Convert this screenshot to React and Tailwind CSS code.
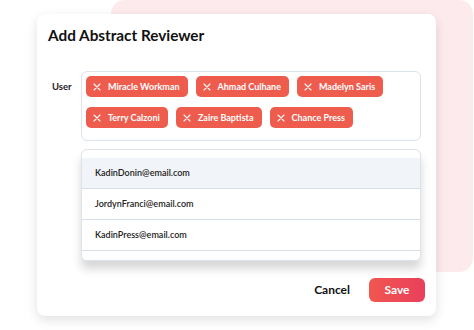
const users = [
  ["Miracle Workman", "Ahmad Culhane", "Madelyn Saris"],
  ["Terry Calzoni", "Zaire Baptista", "Chance Press"],
];

const emails = [
  "KadinDonin@email.com",
  "JordynFranci@email.com",
  "KadinPress@email.com",
  "",
];

const XIcon = () => (
  <svg width="8" height="8" viewBox="0 0 8 8" fill="none">
    <path d="M1 1L7 7M7 1L1 7" stroke="white" strokeWidth="1.1" strokeLinecap="round" />
  </svg>
);

const Tag = ({ name }) => (
  <div className="flex items-center h-[21px] pl-[7px] pr-[8px] gap-[7px] rounded-[5px] bg-[#ee5c4d] text-white text-[9px] font-bold">
    <XIcon />
    <span>{name}</span>
  </div>
);

export default function App() {
  return (
    <div
      className="relative w-[474px] h-[330px] bg-white overflow-hidden"
      style={{ fontFamily: "Lato, 'Noto Sans', sans-serif" }}
    >
      <div className="absolute left-[111px] top-0 w-[362px] h-[272px] rounded-[14px] bg-[#fdeaec]" />

      <div className="relative ml-[37px] mt-[14px] w-[399px] h-[302px] rounded-[8px] bg-white shadow-[0_4px_12px_rgba(0,0,0,0.12)] px-[11px] pt-[11px]">
        <h1 className="text-[15.3px] leading-[20px] font-bold text-[#111]">Add Abstract Reviewer</h1>

        <div className="flex mt-[26px]">
          <div className="w-[33px] pl-[4px] pt-[9px] text-[9.5px] font-bold text-[#222]">User</div>
          <div className="w-[340px]">
            <div className="border border-[#dde3ea] rounded-[6px] pl-[4px] pt-[4px] pb-[12px] flex flex-col gap-[10px]">
              {users.map((row, i) => (
                <div key={i} className="flex gap-[8px]">
                  {row.map((u) => (
                    <Tag key={u} name={u} />
                  ))}
                </div>
              ))}
            </div>

            <div className="mt-[8px] h-[112px] border border-[#dde3ea] rounded-[6px] overflow-hidden bg-white pt-[8px] shadow-[0_8px_10px_rgba(0,0,0,0.16)]">
              {emails.map((e, i) => (
                <div
                  key={i}
                  className={`h-[31px] flex items-center pl-[13px] border-b border-[#d8dee6] text-[9px] font-semibold text-[#222] ${
                    i === 0 ? "bg-[#f1f4f8]" : "bg-white"
                  }`}
                >
                  {e}
                </div>
              ))}
            </div>
          </div>
        </div>

        <div className="flex justify-end items-center mt-[17px] gap-[19px]">
          <span className="text-[12px] font-bold text-[#111]">Cancel</span>
          <button className="w-[56px] h-[24px] rounded-[6px] bg-gradient-to-r from-[#f0564e] to-[#ea3f5c] text-white text-[12px] font-bold">
            Save
          </button>
        </div>
      </div>
    </div>
  );
}
